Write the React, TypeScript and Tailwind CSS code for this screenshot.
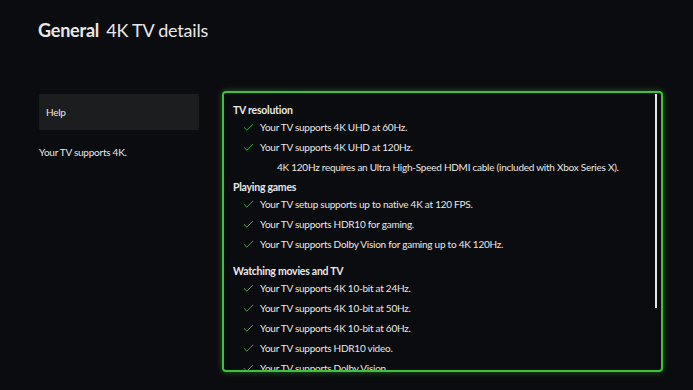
import { Check } from "lucide-react"

const sections = [
  {
    title: "TV resolution",
    gap: "mt-0",
    items: [
      { text: "Your TV supports 4K UHD at 60Hz." },
      { text: "Your TV supports 4K UHD at 120Hz." },
      { text: "4K 120Hz requires an Ultra High-Speed HDMI cable (included with Xbox Series X).", note: true },
    ],
  },
  {
    title: "Playing games",
    gap: "mt-[3px]",
    items: [
      { text: "Your TV setup supports up to native 4K at 120 FPS." },
      { text: "Your TV supports HDR10 for gaming." },
      { text: "Your TV supports Dolby Vision for gaming up to 4K 120Hz." },
    ],
  },
  {
    title: "Watching movies and TV",
    gap: "mt-[10px]",
    items: [
      { text: "Your TV supports 4K 10-bit at 24Hz." },
      { text: "Your TV supports 4K 10-bit at 50Hz." },
      { text: "Your TV supports 4K 10-bit at 60Hz." },
      { text: "Your TV supports HDR10 video." },
      { text: "Your TV supports Dolby Vision." },
    ],
  },
]

export default function App() {
  return (
    <div
      className="w-[693px] h-[390px] overflow-hidden bg-[#0b0c0f] text-[#e8e8e8]"
      style={{ fontFamily: 'Lato, "Open Sans", sans-serif' }}
    >
      <header className="pl-[38px] pt-[17px] flex items-baseline gap-[7px] text-[18px] leading-[26px] tracking-[-0.2px]">
        <span className="font-bold">General</span>
        <span>4K TV details</span>
      </header>

      <div className="flex mt-[48px] text-[10px] tracking-[-0.25px]">
        <aside className="ml-[39px] w-[160px] flex flex-col pt-[3px]">
          <div className="h-[36px] bg-[#1c1d1f] rounded-[2px] flex items-center pl-[7px]">
            Help
          </div>
          <p className="mt-[15px]">Your TV supports 4K.</p>
        </aside>

        <section className="ml-[23px] w-[441px] h-[281px] border-2 border-[#3cc33c] rounded-[4px] shadow-[0_0_6px_rgba(60,195,60,0.45)] relative overflow-hidden">
          <div className="absolute right-[4px] top-[1px] w-[2px] h-[214px] bg-[#e6e6e6]" />
          <div className="pl-[9px] pt-[10px] whitespace-nowrap">
            {sections.map((s) => (
              <div key={s.title}>
                <h3 className={`${s.gap} font-bold h-[14px] leading-[14px] text-[10.5px]`}>{s.title}</h3>
                {s.items.map((it) =>
                  it.note ? (
                    <div key={it.text} className="pl-[44px] h-[20px] leading-[20px]">
                      {it.text}
                    </div>
                  ) : (
                    <div key={it.text} className="flex items-center h-[20px]">
                      <Check className="ml-[9px] w-[13px] h-[13px] text-[#3cc33c]" strokeWidth={1.6} />
                      <span className="ml-[5px]">{it.text}</span>
                    </div>
                  )
                )}
              </div>
            ))}
          </div>
        </section>
      </div>
    </div>
  )
}
